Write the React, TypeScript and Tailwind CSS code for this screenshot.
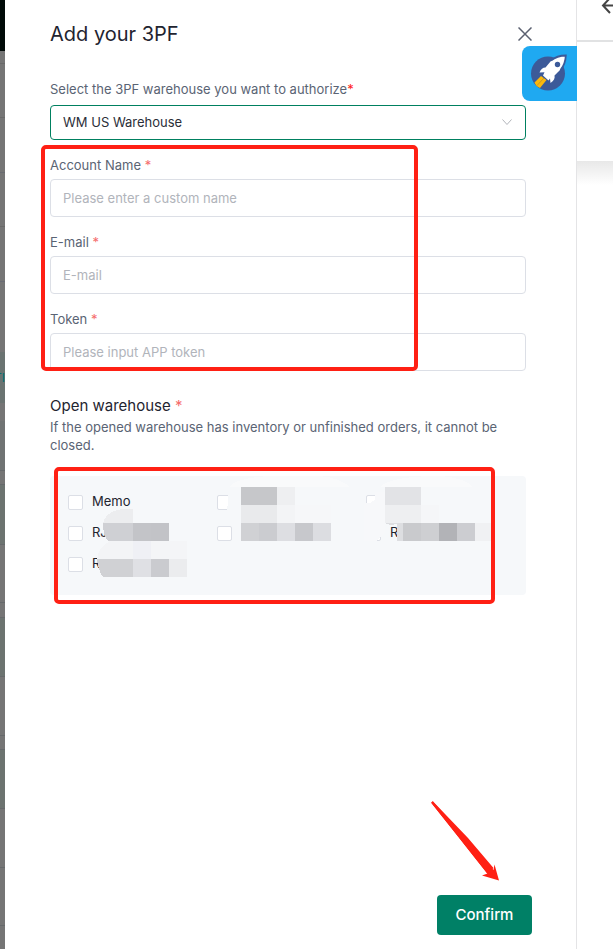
import React, { useState } from "react";

interface Field {
  id: string;
  label: string;
  placeholder: string;
}

interface Warehouse {
  id: string;
  name: string;
  label: string;
}

const fields: Field[] = [
  { id: "account", label: "Account Name", placeholder: "Please enter a custom name" },
  { id: "email", label: "E-mail", placeholder: "E-mail" },
  { id: "token", label: "Token", placeholder: "Please input APP token" },
];

const warehouses: Warehouse[] = [
  { id: "w1", name: "Memo", label: "Memo" },
  { id: "w2", name: "", label: "Warehouse 2" },
  { id: "w3", name: "", label: "Warehouse 3" },
  { id: "w4", name: "RJ", label: "Warehouse 4" },
  { id: "w5", name: "", label: "Warehouse 5" },
  { id: "w6", name: "R", label: "Warehouse 6" },
  { id: "w7", name: "R", label: "Warehouse 7" },
];

// x, y, width, fill of the blocks hiding warehouse names
const mosaic: [number, number, number, string][] = [
  [191, 11, 36, "#c6c7ca"],
  [227, 11, 18, "#eeeff1"],
  [191, 29, 36, "#e9eaec"],
  [227, 29, 18, "#f3f4f6"],
  [245, 29, 36, "#f6f7f9"],
  [191, 47, 18, "#d0d1d4"],
  [209, 47, 18, "#cbccd0"],
  [227, 47, 18, "#dddee2"],
  [245, 47, 18, "#c7c8cc"],
  [263, 47, 18, "#dcdde1"],
  [335, 11, 36, "#e2e3e6"],
  [335, 29, 36, "#eeeff1"],
  [371, 29, 18, "#f5f6f8"],
  [353, 47, 18, "#c9cacd"],
  [371, 47, 18, "#cecfd2"],
  [389, 47, 18, "#b2b3b7"],
  [407, 47, 18, "#cccdd1"],
  [425, 47, 18, "#f0f1f3"],
  [65, 47, 18, "#cfd0d4"],
  [83, 47, 18, "#c3c4c8"],
  [101, 47, 18, "#c2c3c7"],
  [65, 65, 18, "#f3f4f6"],
  [83, 65, 18, "#eff0f5"],
  [101, 65, 36, "#f4f5f7"],
  [83, 83, 18, "#dfe0e4"],
  [101, 83, 18, "#cacbcf"],
  [119, 83, 18, "#ebecee"],
];

function Required() {
  return <span className="text-[#f56c6c]">*</span>;
}

function Marker({ className }: { className: string }) {
  return <div className={`pointer-events-none absolute rounded-[5px] border-4 border-[#ff2014] ${className}`} />;
}

function Mosaic() {
  return (
    <svg className="pointer-events-none absolute left-0 top-0" width="476" height="119" viewBox="0 0 476 119" shapeRendering="crispEdges" aria-hidden="true">
      <path d="M180 11Q185 2 220 0H270Q290 2 300 11Z M330 11Q340 0 390 0Q415 2 423 11Z" fill="#f9fafb" />
      <path d="M178 11H191V65H183V49H177Z" fill="#f6f8fa" />
      <path d="M325 16H335V56L327 65H314V27H320L325 24Z" fill="#f7f8fa" />
      <path d="M83 33V47H53Q57 34 74 33Z" fill="#ecedef" />
      <path d="M65 47H53Q53 60 58 65H83V47Z" fill="#cfd0d4" />
      <path d="M83 65H60Q49 70 47 83H83Z" fill="#f3f4f6" />
      <path d="M83 83H47Q48 94 53 101H83Z" fill="#d0d1d4" />
      <path d="M335 47Q339 50 347 48V65H353V47Z" fill="#dddee1" />
      {mosaic.map(([x, y, w, fill]) => (
        <rect key={`${x}-${y}`} x={x} y={y} width={w} height={18} fill={fill} />
      ))}
    </svg>
  );
}

function RocketBadge() {
  return (
    <button aria-label="Quick start" className="absolute -right-px top-[46px] flex h-[55px] w-[55px] items-center justify-center rounded-l-lg bg-[#1fa9f1]">
      <svg width="55" height="55" viewBox="0 0 55 55" aria-hidden="true">
        <circle cx="26" cy="27.500" r="17" fill="#3c5a99" />
        <path
          d="M43.500 9.800Q34 10 28.500 15.500L23.500 21.500Q19.500 21.500 17.500 26.500L22.500 26.200L21 29.500L26.500 34.500L28 32.500L28.500 37Q33.500 33.500 32.500 29.500L38.500 23.500Q43.500 18 43.500 9.800Z"
          fill="#fff"
        />
        <path d="M29 14.500Q35 9.500 43.800 9.500Q43.500 18 38.500 24" fill="none" stroke="#3c5a99" strokeWidth="1.800" />
        <circle cx="35.500" cy="18.500" r="2.700" fill="#3c5a99" />
        <path d="M19 30L24.500 34L18 42Q14 40.500 12.500 36.500Z" fill="#fcb80b" />
        <path d="M22 32L15 39.500" stroke="#b08a3a" strokeWidth="0.700" />
      </svg>
    </button>
  );
}

// slice of the page under the overlay
function Backdrop() {
  return (
    <div className="w-[5px] shrink-0 overflow-hidden bg-[#757575]">
      <div className="h-[51px] bg-[#000a07]" />
      <div className="h-[13px] border-b border-[#696969]" />
      <div className="h-[54px] border-b border-[#696969]" />
      <div className="h-[55px] border-b border-[#696b70]" />
      <div className="h-[54px] border-b border-[#696969]" />
      <div className="h-[55px] border-b border-[#696b74]" />
      <div className="h-[70px]" />
      <div className="flex h-[51px] items-center justify-end bg-[#6a7371] text-xs text-[#006f73]">TI</div>
      <div className="h-[18px]" />
      <div className="h-[50px] border-b border-[#66696b] bg-[#707373]" />
      <div className="h-[14px] border-b border-[#66696b]" />
      <div className="h-[60px] border-b border-[#66696b] bg-[#6c7370]" />
      <div className="h-[58px] border-b border-[#66696b]" />
      <div className="h-[15px] border-b border-[#66696b]" />
      <div className="h-[59px] border-b border-[#66696b] bg-[#6c7370]" />
      <div className="h-[59px] border-b border-[#66696b]" />
      <div className="h-[14px] border-b border-[#66696b]" />
      <div className="h-[59px] border-b border-[#66696b] bg-[#6c7370]" />
      <div className="h-[59px] border-b border-[#66696b]" />
      <div className="h-[58px] border-b border-[#66696b]" />
    </div>
  );
}

export default function App() {
  const [warehouse, setWarehouse] = useState("WM US Warehouse");

  return (
    <div className="flex min-h-screen bg-white font-['Inter','Liberation_Sans',sans-serif]">
      <Backdrop />

      <main className="relative flex min-w-0 flex-1 flex-col border-r border-[#e4e4e6] pl-[45px]">
        <header className="flex h-[68px] items-center justify-between pr-11">
          <h1 className="text-xl text-[#1f2430]">Add your 3PF</h1>
          <button aria-label="Close">
            <svg width="14" height="14" viewBox="0 0 14 14" fill="none" stroke="#5b6070" strokeWidth="1.500" aria-hidden="true">
              <path d="M0.500 0.500L13.500 13.500M13.500 0.500L0.500 13.500" />
            </svg>
          </button>
        </header>
        <RocketBadge />

        <form className="flex flex-1 flex-col" onSubmit={(e) => e.preventDefault()}>
          <div className="flex-1 pr-[50px] pt-[11px]">
            <label htmlFor="warehouse" className="block text-[13px] leading-5 text-[#5a6474]">
              Select the 3PF warehouse you want to authorize<span className="text-[#ff2020]">*</span>
            </label>
            <div className="relative mt-1.5">
              <select
                id="warehouse"
                value={warehouse}
                onChange={(e) => setWarehouse(e.target.value)}
                className="h-[35px] w-full appearance-none rounded border border-[#008060] bg-white px-3 text-[13px] text-[#2a2e38]"
              >
                <option>WM US Warehouse</option>
              </select>
              <svg className="pointer-events-none absolute right-3.5 top-3.5" width="10" height="7" viewBox="0 0 10 7" fill="none" stroke="#b2b5bb" aria-hidden="true">
                <path d="M0.500 0.500L5 5.500L9.500 0.500" />
              </svg>
            </div>

            <div className="relative flex flex-col gap-[15px] pt-[15px]">
              {fields.map((f) => (
                <div key={f.id}>
                  <label htmlFor={f.id} className="block text-[13px] leading-5 text-[#5a6474]">
                    {f.label} <Required />
                  </label>
                  <input
                    id={f.id}
                    placeholder={f.placeholder}
                    className="mt-1 block h-[38px] w-full rounded border border-[#dcdfe6] px-3 text-[13px] placeholder:text-[#b1b4bb]"
                  />
                </div>
              ))}
              <Marker className="-left-[9px] top-[5px] h-[226px] w-[377px]" />
            </div>

            <h2 className="mt-6 text-[15px] leading-[22px] text-[#1f2430]">
              Open warehouse <Required />
            </h2>
            <p className="mt-px text-[13px] leading-[18px] text-[#5a6474]">
              If the opened warehouse has inventory or unfinished orders, it cannot be closed.
            </p>

            <div className="relative mt-[22px] rounded bg-[#f6f8fa] px-[18px] pb-[20px] pt-[15px]">
              <div className="grid grid-cols-[149px_149px_1fr] gap-y-[9px]">
                {warehouses.map((w) => (
                  <label key={w.id} className="flex h-[22px] items-center gap-[9px] text-[13px] text-[#1f2430]">
                    <input type="checkbox" aria-label={w.label} className="size-[15px] appearance-none rounded-xs border border-[#dcdfe6] bg-white" />
                    {w.name}
                  </label>
                ))}
              </div>
              <Mosaic />
              <Marker className="left-1 -top-[9px] h-[137px] w-[441px]" />
            </div>
          </div>

          <footer className="relative flex justify-end pb-3.5 pr-11">
            <svg className="pointer-events-none absolute -top-[94px] right-[76px]" width="69" height="80" viewBox="0 0 69 80" aria-hidden="true">
              <path d="M0.200 1.800L1.800 0.200L62.500 69L63.500 63.500L68 79.500L51 74.500L56.500 72.500Q40 52 29 38Z" fill="#ff2014" />
              <path d="M0.200 1.800L1.800 0.200L37 37L62.500 67L56.500 73L29 38Z" fill="#ff2014" />
            </svg>
            <button type="submit" className="h-10 w-[95px] rounded bg-[#008066] text-[15px] font-medium text-white">
              Confirm
            </button>
          </footer>
        </form>
      </main>

      <aside className="w-9 shrink-0 overflow-hidden">
        <div className="flex h-[42px] items-start justify-end overflow-hidden border-b-2 border-[#e1e2e3]">
          <svg className="shrink-0" width="12" height="14" viewBox="0 0 12 14" fill="none" stroke="#444" strokeWidth="2" aria-hidden="true">
            <path d="M9 -2L2 5.500L9 13M2 5.500H12" />
          </svg>
        </div>
        <div className="h-[119px]" />
        <div className="h-6 bg-gradient-to-b from-[#e8e8e8] to-white" />
      </aside>
    </div>
  );
}
